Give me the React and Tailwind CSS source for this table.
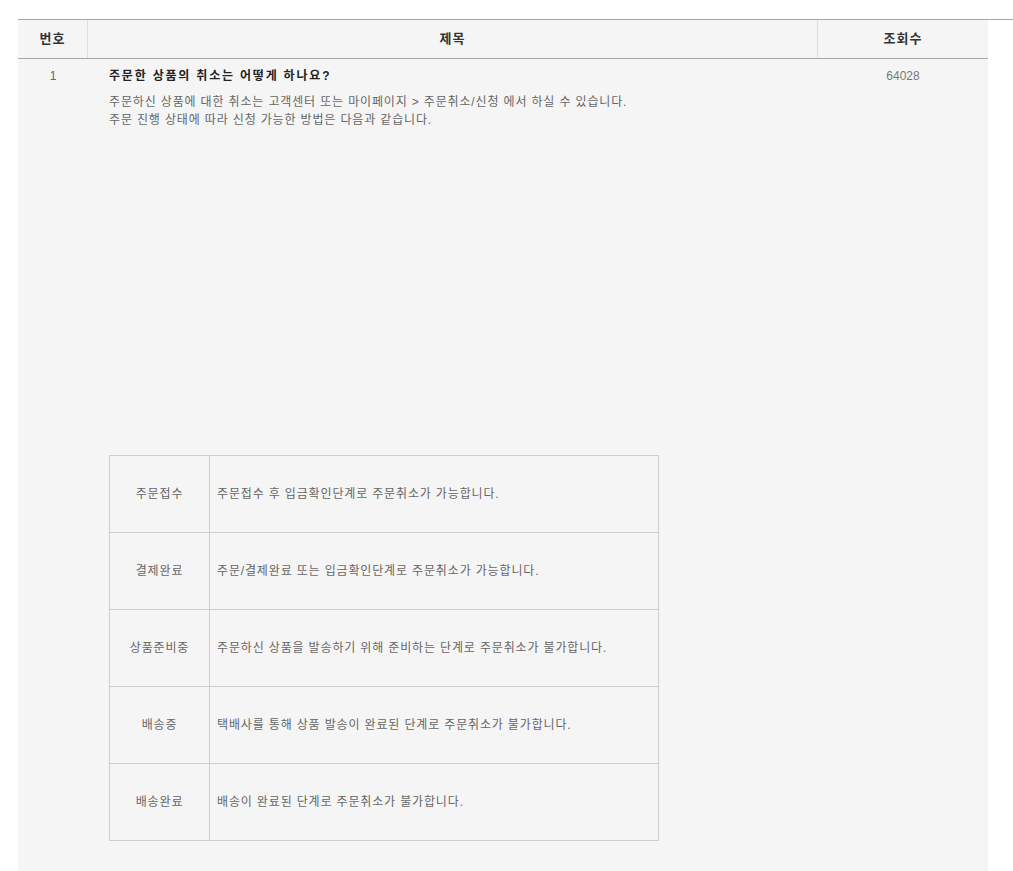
import React from "react";

const steps = [
  { label: "주문접수", desc: "주문접수 후 입금확인단계로 주문취소가 가능합니다." },
  { label: "결제완료", desc: "주문/결제완료 또는 입금확인단계로 주문취소가 가능합니다." },
  { label: "상품준비중", desc: "주문하신 상품을 발송하기 위해 준비하는 단계로 주문취소가 불가합니다." },
  { label: "배송중", desc: "택배사를 통해 상품 발송이 완료된 단계로 주문취소가 불가합니다." },
  { label: "배송완료", desc: "배송이 완료된 단계로 주문취소가 불가합니다." },
];

const font = { fontFamily: '"Liberation Sans", "Noto Sans CJK KR", sans-serif' };

const App = () => {
  return (
    <div className="bg-white min-h-[871px] pt-[19px] pl-[18px]" style={font}>
      <div className="w-[995px] border-t border-[#a6a6a6]">
        {/* header */}
        <div className="flex w-[970px] h-[39px] bg-[#f5f5f5] border-b border-[#a6a6a6] text-[13px] font-bold text-[#333] tracking-[1px]">
          <div className="w-[70px] flex items-center justify-center border-r border-[#dddddd]">번호</div>
          <div className="w-[730px] flex items-center justify-center border-r border-[#dddddd]">제목</div>
          <div className="flex-1 flex items-center justify-center">조회수</div>
        </div>

        {/* row */}
        <div className="flex w-[970px] bg-[#f5f5f5] text-[12px] leading-[18px] text-[#666] tracking-[0.85px]">
          <div className="w-[70px] pt-[8px] text-center tracking-normal">1</div>
          <div className="w-[730px] pt-[8px] pl-[21px] pb-[30px]">
            <p className="font-bold text-[#222] tracking-[1.8px]">주문한 상품의 취소는 어떻게 하나요?</p>
            <div className="mt-[8px]">
              <p>주문하신 상품에 대한 취소는 고객센터 또는 마이페이지 &gt; 주문취소/신청 에서 하실 수 있습니다.</p>
              <p>주문 진행 상태에 따라 신청 가능한 방법은 다음과 같습니다.</p>
            </div>
            <div className="h-[326px]"></div>
            <div className="w-[550px] border border-[#cccccc]">
              {steps.map((s, i) => (
                <div
                  key={s.label}
                  className={
                    i < steps.length - 1
                      ? "flex h-[77px] border-b border-[#cccccc]"
                      : "flex h-[76px]"
                  }
                >
                  <div className="w-[100px] flex items-center justify-center border-r border-[#cccccc]">
                    {s.label}
                  </div>
                  <div className="flex-1 flex items-center pl-[7px]">{s.desc}</div>
                </div>
              ))}
            </div>
          </div>
          <div className="flex-1 pt-[8px] text-center tracking-normal text-[#777]">64028</div>
        </div>
      </div>
    </div>
  );
};

export default App;
